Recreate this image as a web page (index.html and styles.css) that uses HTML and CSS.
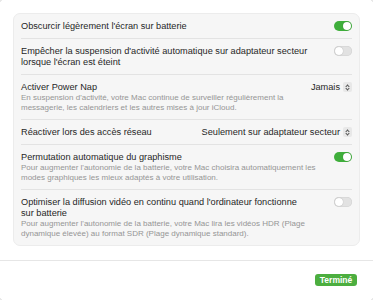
FILE: index.html
```html
<!DOCTYPE html>
<html lang="fr">
<head>
  <meta charset="UTF-8">
  <title>Batterie</title>
  <link rel="stylesheet" href="styles.css">
</head>
<body>
  <div class="sheet">
    <!-- réglages -->
    <div class="card">
      <div class="row">
        <div class="text">
          <div class="title">Obscurcir légèrement l'écran sur batterie</div>
        </div>
        <span class="toggle on"></span>
      </div>
      <div class="row">
        <div class="text">
          <div class="title">Empêcher la suspension d'activité automatique sur adaptateur secteur lorsque l'écran est éteint</div>
        </div>
        <span class="toggle"></span>
      </div>
      <div class="row">
        <div class="text">
          <div class="title">Activer Power Nap</div>
          <div class="desc">En suspension d'activité, votre Mac continue de surveiller régulièrement la messagerie, les calendriers et les autres mises à jour iCloud.</div>
        </div>
        <span class="popup">Jamais <span class="stepper"></span></span>
      </div>
      <div class="row">
        <div class="text">
          <div class="title">Réactiver lors des accès réseau</div>
        </div>
        <span class="popup">Seulement sur adaptateur secteur <span class="stepper"></span></span>
      </div>
      <div class="row">
        <div class="text">
          <div class="title">Permutation automatique du graphisme</div>
          <div class="desc">Pour augmenter l'autonomie de la batterie, votre Mac choisira automatiquement les modes graphiques les mieux adaptés à votre utilisation.</div>
        </div>
        <span class="toggle on"></span>
      </div>
      <div class="row">
        <div class="text">
          <div class="title">Optimiser la diffusion vidéo en continu quand l'ordinateur fonctionne sur batterie</div>
          <div class="desc">Pour augmenter l'autonomie de la batterie, votre Mac lira les vidéos HDR (Plage dynamique élevée) au format SDR (Plage dynamique standard).</div>
        </div>
        <span class="toggle"></span>
      </div>
    </div>
    <div class="footer">
      <button class="done">Terminé</button>
    </div>
  </div>
</body>
</html>
```

FILE: styles.css
```css
body {
  margin: 0;
  background: #ffffff;
  font-family: 'Liberation Sans', Arial, sans-serif;
  color: #262626;
  overflow: hidden;
}
.sheet {
  margin: -5px;
  width: 381px;
  height: 308px;
  background: #ffffff;
  border: 1px solid #cfcfcf;
  border-radius: 18px;
  display: flex;
  flex-direction: column;
}
.card {
  margin: 17px 17px 0 17px;
  background: #f6f6f6;
  border: 1px solid #ececec;
  border-radius: 7px;
  padding: 0 7px;
}
.row {
  display: flex;
  align-items: flex-start;
  gap: 10px;
  padding: 6.5px 0;
  border-bottom: 1px solid #e3e3e3;
}
.row:last-child { border-bottom: none; }
.text { flex: 1; }
.row:nth-child(2) .text,
.row:nth-child(6) .text { padding-right: 14px; }
.title {
  font-size: 9.2px;
  line-height: 11px;
}
.desc {
  font-size: 8px;
  line-height: 10px;
  color: #959595;
}
.toggle {
  flex: none;
  width: 18px;
  height: 10px;
  border-radius: 6px;
  background: #e2e2e2;
  box-shadow: inset 0 0 0 0.5px #cfcfcf;
  display: flex;
  align-items: center;
  padding: 0 1px;
  box-sizing: border-box;
  margin-top: 0.5px;
}
.toggle::after {
  content: '';
  width: 8px;
  height: 8px;
  border-radius: 50%;
  background: #ffffff;
  box-shadow: 0 0 1px #00000055;
}
.toggle.on {
  background: #3fae3b;
  box-shadow: none;
  justify-content: flex-end;
}
.popup {
  flex: none;
  font-size: 9.2px;
  line-height: 11px;
  display: flex;
  align-items: center;
  gap: 3px;
}
.stepper {
  width: 9px;
  height: 10px;
  border-radius: 2px;
  background: #e8e8e8;
  position: relative;
}
.stepper::before, .stepper::after {
  content: '';
  position: absolute;
  left: 3px;
  width: 2px;
  height: 2px;
  border-left: 1px solid #555;
  border-top: 1px solid #555;
}
.stepper::before { top: 2.5px; transform: rotate(45deg); }
.stepper::after { bottom: 2.5px; transform: rotate(225deg); }
.footer {
  margin-top: 14px;
  border-top: 1px solid #e6e6e6;
  display: flex;
  justify-content: flex-end;
  padding: 13px 20px 0 0;
}
.done {
  font-family: inherit;
  font-size: 8.5px;
  font-weight: 700;
  color: #ffffff;
  background: #4cae3f;
  border: none;
  border-radius: 3px;
  height: 12px;
  width: 42px;
  padding: 0;
  line-height: 12px;
}
```
